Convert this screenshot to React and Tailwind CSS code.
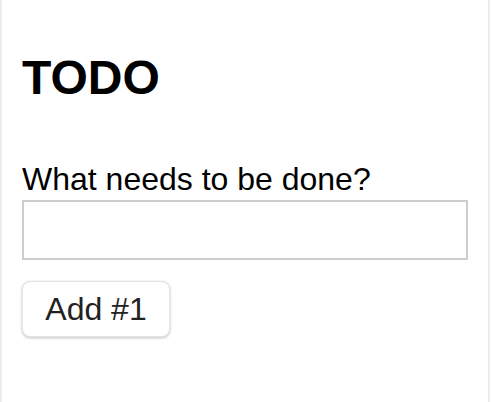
import React, { useState } from 'react';

export default function App() {
  const [text, setText] = useState('');
  const [count, setCount] = useState(1);

  const addTodo = (e) => {
    e.preventDefault();
    setCount(count + 1);
    setText('');
  };

  return (
    <div className="w-[490px] min-h-[402px] bg-white border-x-2 border-[#ebebeb] px-5 pt-[54px] font-['Liberation_Sans',Arial,sans-serif] text-black">
      <h1 className="text-[48px] leading-none font-bold">TODO</h1>
      <form onSubmit={addTodo} className="mt-[58px] flex flex-col items-start">
        <label htmlFor="new-todo" className="text-[32px] leading-[38px]">
          What needs to be done?
        </label>
        <input
          id="new-todo"
          value={text}
          onChange={(e) => setText(e.target.value)}
          className="mt-[2px] w-[446px] h-[60px] border-2 border-[#cccccc] px-2 text-[28px] outline-none"
        />
        <button
          type="submit"
          className="mt-[21px] w-[148px] h-[56px] rounded-lg bg-white border border-[#e4e4e4] shadow-[0_1px_3px_rgba(0,0,0,0.25)] text-[32px] text-[#222]"
        >
          Add #{count}
        </button>
      </form>
    </div>
  );
}
